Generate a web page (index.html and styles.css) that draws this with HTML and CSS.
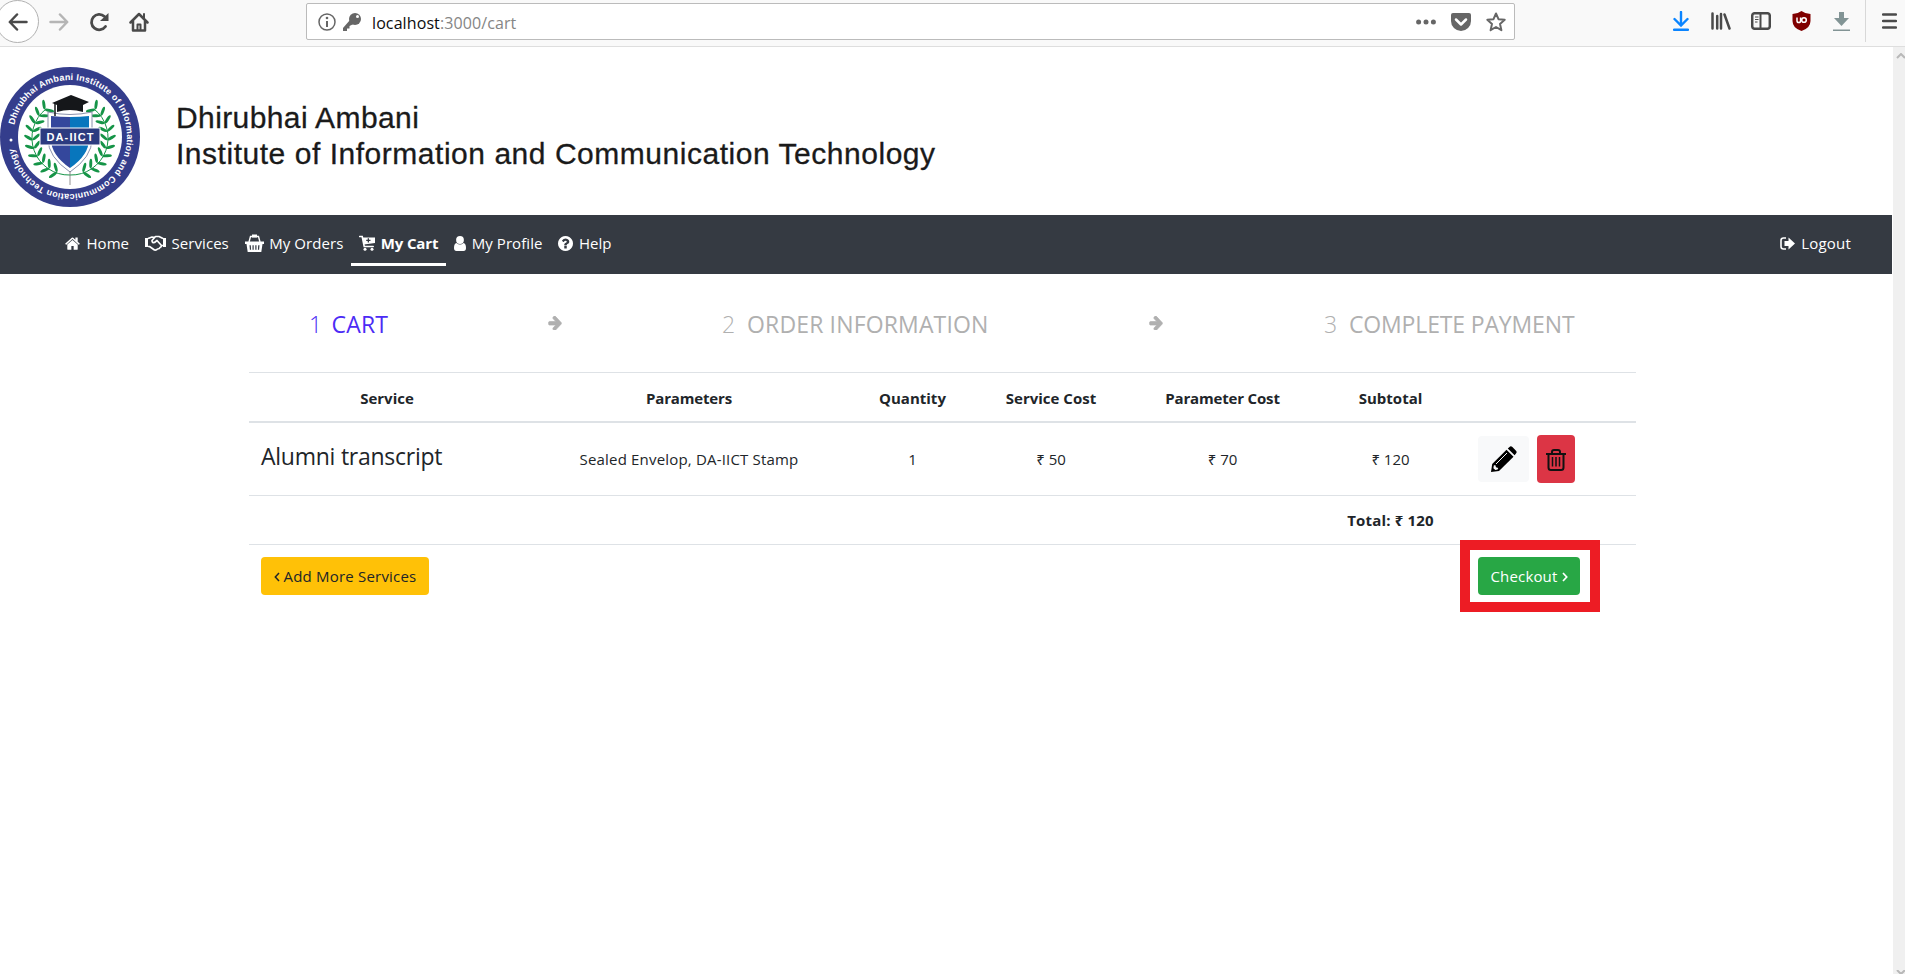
FILE: index.html
```html
<!DOCTYPE html>
<html lang="en">
<head>
<meta charset="utf-8">
<title>My Cart</title>
<link rel="stylesheet" href="styles.css">
</head>
<body>
<header class="browser">
  <div class="browser-nav">
    <span class="back"><svg width="20" height="18" viewBox="0 0 20 18"><path d="M18.500 9H2.500M9 1.500L1.800 9 9 16.500" class="ln dark w25"/></svg></span>
    <svg class="fwd" width="20" height="18" viewBox="0 0 20 18"><path d="M1.500 9h16M11 1.500L18.200 9 11 16.500" class="ln pale w25"/></svg>
    <svg class="reload" width="20" height="20" viewBox="0 0 20 20"><path d="M16.500 14.500A7.700 7.700 0 1 1 15.500 4.500" class="ln dark w3"/><path d="M19.500 1v8H11z" fill="#4a4a4a"/></svg>
    <svg class="home" width="20" height="20" viewBox="0 0 20 20"><path d="M1.500 10.500L10 2l8.500 8.500M4 9v9.500h12V9" class="ln dark w25"/><path d="M15 2v5M8.500 18v-5.500h3V18" class="ln dark w2"/></svg>
  </div>
  <div class="urlbar">
    <svg width="18" height="18" viewBox="0 0 18 18"><circle cx="9" cy="9" r="8" class="ln grey w15"/><path d="M9 8v6" stroke="#666" stroke-width="2"/><circle cx="9" cy="5" r="1.300" fill="#666"/></svg>
    <svg class="key" width="18" height="18" viewBox="0 0 18 18"><circle cx="12" cy="6" r="6" fill="#666"/><circle cx="14.500" cy="3.500" r="1.500" fill="#fff"/><path d="M7 7L0 15v3h4v-2.500h2.500V13l4-2z" fill="#666"/></svg>
    <span class="url"><b>localhost</b>:3000/cart</span>
    <span class="page-actions">
      <svg width="20" height="6" viewBox="0 0 20 6"><circle cx="2.600" cy="3" r="2.500" fill="#666"/><circle cx="10" cy="3" r="2.500" fill="#666"/><circle cx="17.400" cy="3" r="2.500" fill="#666"/></svg>
      <svg width="20" height="18" viewBox="0 0 20 18"><path d="M2 0h16a2 2 0 0 1 2 2v6a10 10 0 0 1-20 0V2a2 2 0 0 1 2-2z" fill="#666"/><path d="M5 6.500l5 5 5-5" fill="none" stroke="#fff" stroke-width="2.500" stroke-linecap="round" stroke-linejoin="round"/></svg>
      <svg width="20" height="20" viewBox="0 0 20 20"><path d="M10 1.500l2.500 5.700 6.200.6-4.700 4.100 1.400 6.300L10 15l-5.400 3.200L6 11.900 1.300 7.800l6.200-.6z" class="ln grey w2"/></svg>
    </span>
  </div>
  <div class="browser-tools">
    <span><svg width="16" height="20" viewBox="0 0 16 20"><path d="M8 1v13M1.500 8L8 14.500 14.500 8M1 18.800h14" fill="none" stroke="#0a84ff" stroke-width="2.400" stroke-linecap="round"/></svg></span>
    <span><svg width="20" height="18" viewBox="0 0 20 18"><path d="M1.500 1.500v15M6.200 4v12.500M10 2v14.500M13.500 2.500l5 14" class="ln dark w25"/></svg></span>
    <span><svg width="20" height="18" viewBox="0 0 20 18"><rect x="1.200" y="1.200" width="17.600" height="15.600" rx="2.500" class="ln dark w25"/><path d="M9.500 1v16" stroke="#4a4a4a" stroke-width="2"/><path d="M4 5h3.500M4 7.500h3.500M4 10h2.500" stroke="#4a4a4a" stroke-width="1.200"/></svg></span>
    <span><svg width="19" height="20" viewBox="0 0 19 20"><path d="M9.500 0q4 3 9 3v7q0 7-9 10Q.5 17 .5 10V3q5 0 9-3z" fill="#800000"/><path d="M5 6.500v3.200a1.800 1.800 0 0 0 3.600 0V6.500" fill="none" stroke="#fff" stroke-width="1.500"/><circle cx="12" cy="9" r="2.300" fill="none" stroke="#fff" stroke-width="1.600"/></svg></span>
    <span><svg width="17" height="19" viewBox="0 0 17 19"><path d="M6 0h5v6h5l-7.500 8L1 6h5zM0 17.500h17V19H0z" fill="#829495"/></svg></span>
    <span class="menu"><svg width="15" height="16" viewBox="0 0 15 16"><path d="M1 1.500h13M1 8h13M1 14.500h13" class="ln dark w25"/></svg></span>
  </div>
</header>
<div class="viewport">
<main class="page">
  <div class="brand">
    <svg class="seal" width="142" height="142" viewBox="-71 -71 142 142">
      <defs><path id="ring" d="M-57 0A57 57 0 0 1 57 0A57 57 0 0 1-57 0"/>
      <g id="leaf" fill="#159447"><ellipse cx="-4" cy="-3" rx="4.800" ry="1.500" transform="rotate(35 -4 -3)"/><ellipse cx="4" cy="-3" rx="4.800" ry="1.500" transform="rotate(-35 4 -3)"/></g>
      <g id="branch"><path d="M0 38A37 37 0 0 1-24-28" fill="none" stroke="#159447" stroke-width="1"/>
      <use href="#leaf" transform="rotate(200) translate(0 -37.500) rotate(90)"/><use href="#leaf" transform="rotate(213) translate(0 -37.500) rotate(90)"/><use href="#leaf" transform="rotate(226) translate(0 -37.500) rotate(90)"/><use href="#leaf" transform="rotate(239) translate(0 -37.500) rotate(90)"/><use href="#leaf" transform="rotate(252) translate(0 -37.500) rotate(90)"/><use href="#leaf" transform="rotate(265) translate(0 -37.500) rotate(90)"/><use href="#leaf" transform="rotate(278) translate(0 -37.500) rotate(90)"/><use href="#leaf" transform="rotate(291) translate(0 -37.500) rotate(90)"/><use href="#leaf" transform="rotate(304) translate(0 -37.500) rotate(90)"/><use href="#leaf" transform="rotate(317) translate(0 -37.500) rotate(90)"/></g></defs>
      <circle r="70" fill="#343d8c"/><circle r="52" fill="#fff"/>
      <text class="ring-text"><textPath href="#ring" startOffset="12" textLength="334">Dhirubhai Ambani Institute of Information and Communication Technology</textPath></text>
      <circle cx="-59" cy="3" r="1.500" fill="#fff"/>
      <use href="#branch"/><use href="#branch" transform="scale(-1 1)"/>
      <path d="M-22-25q22 5 44 0v27q0 18-22 33-22-15-22-33z" fill="#fff" stroke="#8a91ac"/>
      <path d="M0-20q-10 0-19-1V2Q-19 18 0 31z" fill="#34479c"/><path d="M0-20q10 0 19-1V2Q19 18 0 31z" fill="#0876bd"/>
      <path d="M0 34v14" stroke="#777" stroke-width=".8"/>
      <rect x="-30" y="-9" width="60" height="17" fill="#2c3b80" stroke="#fff"/>
      <text class="seal-name" x="0" y="3.500" text-anchor="middle" textLength="47">DA-IICT</text>
      <path d="M-18-34L1-42l18 7-6 3v7q-13-4-26 0v-7z" fill="#15171a"/><path d="M-15-34v13" stroke="#15171a" stroke-width="1.500"/>
    </svg>
    <h1 class="brand-name"><span class="brand-short">Dhirubhai Ambani</span><br>Institute of Information and Communication Technology</h1>
  </div>

  <nav class="nav">
    <a class="nav-link home-link"><svg width="15" height="16" viewBox="0 0 1664 1664" preserveAspectRatio="none"><path d="M1408 992v480q0 26-19 45t-45 19h-384v-384h-256v384h-384q-26 0-45-19t-19-45v-480l576-477 575 474q1 2 1 6zm223-69l-62 74q-8 9-21 11h-3q-13 0-21-7l-692-577-692 577q-12 8-24 7-13-2-21-11l-62-74q-8-10-7-23.500t11-21.500l719-599q32-26 76-26t76 26l244 204v-195q0-14 9-23t23-9h192q14 0 23 9t9 23v408l219 182q10 8 11 21.500t-7 23.500z"/></svg><span>Home</span></a>
    <a class="nav-link"><svg width="21" height="16" viewBox="0 0 21 16"><path d="M0 3h3v9H0zM18 3h3v9h-3z"/><path d="M3 3.500l4-1.500 3 .5M3 11.500h1.500l5 3.500q2 .3 3-1 2 0 2.500-1.500 1.500-.5 1.500-2H18M18 3.500L14 1.500h-3.500L7 5.500q0 2.500 2.500 2L12 5.500l4.500 5" fill="none" stroke="currentColor" stroke-width="1.700" stroke-linejoin="round"/></svg><span>Services</span></a>
    <a class="nav-link"><svg width="19" height="18" viewBox="0 0 19 18"><path d="M4 8L5.500 2.500h8L15 8" fill="none" stroke="currentColor" stroke-width="1.400"/><path d="M7 .5h5v3H7zM0 7.500h19v2.500H0z"/><path fill-rule="evenodd" d="M1.500 10h16l-1.200 8H2.700zM4.500 11.300l.4 4.500h1.200l-.3-4.500zM7.500 11.300v4.500h1.200v-4.500zM10.300 11.300v4.500h1.200v-4.500zM13.200 11.300l-.3 4.500h1.200l.4-4.500z"/></svg><span>My Orders</span></a>
    <a class="nav-link active"><svg width="16" height="16" viewBox="0 0 16 16"><path d="M.7 1.500h2.500l2 10h9" fill="none" stroke="currentColor" stroke-width="1.600" stroke-linecap="round"/><path fill-rule="evenodd" d="M3.500 2.500H16v5.500L5 9.500zM8.700 3.300v1.500H7.200V6h1.500v1.500H10V6h1.500V4.800H10V3.300z"/><circle cx="6" cy="14.300" r="1.500"/><circle cx="13" cy="14.300" r="1.500"/></svg><span>My Cart</span></a>
    <a class="nav-link"><svg width="12" height="15" viewBox="0 0 12 15"><circle cx="6" cy="4" r="3.900"/><path d="M2.500 7q3.500 3 7 0Q12 7.500 12 12q0 3-2.500 3h-7Q0 15 0 12q0-4.500 2.500-5z"/></svg><span>My Profile</span></a>
    <a class="nav-link"><svg width="15" height="15" viewBox="0 128 1536 1536"><path d="M896 1376v-192q0-14-9-23t-23-9h-192q-14 0-23 9t-9 23v192q0 14 9 23t23 9h192q14 0 23-9t9-23zm256-672q0-88-55.500-163t-138.500-116-170-41q-243 0-371 213-15 24 8 42l132 100q7 6 19 6 16 0 25-12 53-68 86-92 34-24 86-24 48 0 85.500 26t37.500 59q0 38-20 61t-68 45q-63 28-115.500 86.500t-52.500 125.500v36q0 14 9 23t23 9h192q14 0 23-9t9-23q0-19 21.500-49.500t54.500-49.500q32-18 49-28.500t46-35 44.500-48 28-60.500 12.500-81zm384 192q0 209-103 385.500t-279.500 279.500-385.500 103-385.500-103-279.500-279.500-103-385.500 103-385.500 279.500-279.500 385.500-103 385.500 103 279.500 279.500 103 385.500z"/></svg><span>Help</span></a>
    <a class="nav-link logout"><svg width="15" height="13" viewBox="0 0 15 13"><path d="M6 1H3.500Q1 1 1 3.500v6Q1 12 3.500 12H6" fill="none" stroke="currentColor" stroke-width="1.600"/><path d="M4.500 4h4V.5l6.500 6-6.500 6V9h-4z"/></svg><span>Logout</span></a>
  </nav>

  <section class="cart">
    <div class="steps">
      <div class="step current"><i>1</i>CART</div>
      <svg width="14" height="14" viewBox="0 180 1600 1500" preserveAspectRatio="none"><path stroke="currentColor" stroke-width="70" d="M1536 960q0 54-37 91l-651 651q-39 37-91 37-51 0-90-37l-75-75q-38-38-38-91t38-91l293-293H181q-52 0-84.500-37.500T64 1024V896q0-53 32.500-90.500T181 768h704L592 474q-38-36-38-90t38-90l75-75q38-38 90-38 53 0 91 38l651 651q37 35 37 90z"/></svg>
      <div class="step"><i>2</i><span class="s2">ORDER INFORMATION</span></div>
      <svg width="14" height="14" viewBox="0 180 1600 1500" preserveAspectRatio="none"><path stroke="currentColor" stroke-width="70" d="M1536 960q0 54-37 91l-651 651q-39 37-91 37-51 0-90-37l-75-75q-38-38-38-91t38-91l293-293H181q-52 0-84.500-37.500T64 1024V896q0-53 32.500-90.500T181 768h704L592 474q-38-36-38-90t38-90l75-75q38-38 90-38 53 0 91 38l651 651q37 35 37 90z"/></svg>
      <div class="step"><i>3</i><span class="s3">COMPLETE PAYMENT</span></div>
    </div>
    <div class="row head">
      <span>Service</span><span class="tight">Parameters</span><span>Quantity</span><span>Service Cost</span><span class="tight">Parameter Cost</span><span>Subtotal</span><span></span>
    </div>
    <div class="row item">
      <span class="name">Alumni transcript</span><span class="params">Sealed Envelop, DA-IICT Stamp</span><span>1</span><span>₹ 50</span><span>₹ 70</span><span>₹ 120</span>
      <div class="actions">
        <button class="edit"><svg width="27" height="27" viewBox="0 0 27 27"><path d="M1 26l1.200-8L16.500 3.700l7 7L9 25z"/><path d="M17.800 2.400L19.500.9q1.400-1.200 2.900.2L26 4.700q1.300 1.400 0 2.800l-1.400 1.800z"/><path d="M6 18L17 7" stroke="#f8f9fa" fill="none"/><path d="M3.800 19.500l1.500-.5.700 2.200 2.200.8-.6 1.600-2.200.5-2-1.800z" fill="#f8f9fa"/></svg></button>
        <button class="delete"><svg width="20" height="22" viewBox="0 0 20 22"><path d="M0 5h20M6 4.500V3q0-2 2-2h4q2 0 2 2v1.500M2.500 5v13.500q0 2.500 2.500 2.500h10q2.500 0 2.500-2.500V5" fill="none" stroke="#111" stroke-width="2"/><path d="M6.500 8v9.500M10 8v9.500M13.500 8v9.500" stroke="#111" stroke-width="1.500"/></svg></button>
      </div>
    </div>
    <div class="row total"><b>Total: ₹ 120</b></div>
    <div class="footer">
      <button class="btn add"><svg width="6" height="10" viewBox="0 0 6 10"><path d="M5 1L1.300 5 5 9" fill="none" stroke="currentColor" stroke-width="1.500"/></svg><span>Add More Services</span></button>
      <button class="btn checkout"><span>Checkout</span><svg width="6" height="10" viewBox="0 0 6 10"><path d="M1 1l3.700 4L1 9" fill="none" stroke="currentColor" stroke-width="1.700"/></svg></button>
    </div>
  </section>
</main>
<div class="scrollbar"><svg width="9" height="6" viewBox="0 0 9 6"><path d="M1 5l4-4 4 4" fill="none" stroke="#b8b8b8" stroke-width="2"/></svg><svg width="9" height="4" viewBox="0 0 9 4"><path d="M1 0l4 4 4-4" fill="none" stroke="#b8b8b8" stroke-width="2"/></svg></div>
</div>
</body>
</html>
```

FILE: styles.css
```css
*, *::after { box-sizing: border-box; }
body {
  margin: 0;
  height: 974px;
  display: flex;
  flex-direction: column;
  overflow: hidden;
  background: #fff;
  color: #212529;
  font: 15px/24px "Open Sans", "Noto Sans", sans-serif;
}
svg { display: block; flex: none; fill: currentColor; }
button { border: 0; padding: 0; font: inherit; color: inherit; }
.ln { fill: none; stroke-linecap: round; stroke-linejoin: round; }
.dark { stroke: #4a4a4a; }
.pale { stroke: #b5b5b5; }
.grey { stroke: #666; }
.w3 { stroke-width: 2.8; }
.w25 { stroke-width: 2.5; }
.w2 { stroke-width: 2; }
.w15 { stroke-width: 1.5; }

/* browser toolbar */
.browser {
  display: flex;
  align-items: flex-start;
  height: 47px;
  flex: none;
  background: #f9f9f9;
  border-bottom: 1px solid #dedede;
}
.browser > * { flex: none; }
.browser-nav { display: flex; align-items: center; width: 306px; height: 43px; }
.back {
  display: flex;
  align-items: center;
  justify-content: center;
  width: 43px;
  height: 43px;
  margin-left: -4px;
  border: 1px solid #b1b1b1;
  border-radius: 50%;
  background: #fff;
}
.fwd { margin-left: 10px; }
.reload, .home { margin-left: 20px; }
.urlbar {
  display: flex;
  align-items: center;
  width: 1209px;
  height: 37px;
  margin-top: 3px;
  padding: 0 8px 0 11px;
  background: #fff;
  border: 1px solid #bbb;
  border-radius: 2px;
}
.key { margin-left: 7px; }
.url { margin: 2px 0 0 11px; font-size: 16px; letter-spacing: .1px; color: #858585; }
.url b { font-weight: 400; color: #0c0c0d; }
.page-actions { display: flex; align-items: center; gap: 15px; margin-left: auto; }
.browser-tools { display: flex; align-items: center; height: 42px; margin-left: 146px; }
.browser-tools span { display: flex; align-items: center; justify-content: center; flex: none; width: 40px; height: 42px; }
.browser-tools .menu { margin-left: 4px; border-left: 1px solid #d8d8d8; width: 48px; }

/* page */
.viewport { display: flex; flex: 1; }
.page { width: 1892px; }
.scrollbar {
  display: flex;
  flex-direction: column;
  align-items: flex-end;
  justify-content: space-between;
  width: 12px;
  margin-left: 1px;
  padding: 6px 0 0;
  background: #f0f0f0;
}
.brand { display: flex; height: 168px; padding-top: 18px; }
.seal { margin: .5px 1px 0 -1px; }
.brand-name {
  margin: 35px 0 0 34px;
  font: 400 30px/35.5px "Liberation Sans", Arial, sans-serif;
  letter-spacing: .53px;
  color: #1a1a1a;
  -webkit-text-stroke: .3px #1a1a1a;
}
.brand-short { letter-spacing: .4px; }
.ring-text { font: bold 9px "Liberation Sans", Arial, sans-serif; fill: #fff; }
.seal-name { font: bold 11px "Liberation Sans", Arial, sans-serif; fill: #fff; }

.nav { display: flex; height: 59px; padding: 8px 33px 8px 57px; background: #353a42; color: #fff; }
.nav-link {
  display: flex;
  align-items: center;
  gap: 5.5px;
  height: 43px;
  padding: 8px;
  border-bottom: 3px solid transparent;
  letter-spacing: .05px;
}
.home-link { gap: 6.5px; }
.active { font-weight: 700; letter-spacing: -.15px; border-color: #fff; }
.logout { margin-left: auto; gap: 6px; letter-spacing: .2px; }

.cart { width: 1387px; margin-left: 249px; }
.steps {
  display: grid;
  grid-template-columns: 241px 174.5px 427px 175px auto;
  align-items: center;
  height: 98px;
  padding-left: 57.5px;
  color: #b0b0b0;
  font-size: 23px;
  line-height: 36px;
}
.step { margin-top: 2px; }
.step i { display: inline-block; width: 25px; font-style: normal; font-weight: 300; }
.current { color: #4c2bf5; letter-spacing: .2px; }
.current i { padding-left: 2.5px; }
.s2 { letter-spacing: .15px; }
.s3 { letter-spacing: -.15px; }

.row {
  display: grid;
  grid-template-columns: 276px 328px 119px 158px 185px 151px 170px;
  align-items: center;
  text-align: center;
  border-top: 1px solid #dee2e6;
}
.head { height: 51px; padding-top: 2px; border-bottom: 2px solid #dee2e6; font-weight: 700; }
.head .tight { letter-spacing: -.17px; }
.item { height: 72px; border-top: 0; }
.name { padding-left: 12px; text-align: left; font-size: 23px; letter-spacing: -.25px; margin-top: -6px; }
.params { letter-spacing: .18px; }
.actions { display: flex; align-items: center; gap: 8px; padding-left: 12px; }
.edit, .delete { display: flex; align-items: center; justify-content: center; border-radius: 4px; }
.edit { width: 51px; height: 46px; background: #f8f9fa; color: #000; }
.delete { width: 38px; height: 48px; padding-top: 2px; background: #dc3545; }
.total { height: 49px; }
.total b { grid-column: 6; letter-spacing: .17px; }

.footer { display: flex; justify-content: space-between; padding: 12px 56px 12px 12px; border-top: 1px solid #dee2e6; }
.btn { display: flex; align-items: center; justify-content: center; height: 38px; border-radius: 4px; }
.btn svg { margin-top: 1px; }
.add { width: 168px; gap: 4px; background: #ffc107; letter-spacing: .2px; }
.checkout { position: relative; width: 102px; gap: 4px; background: #28a745; color: #fff; letter-spacing: .16px; }
.checkout::after {
  content: "";
  position: absolute;
  top: -17px;
  left: -18px;
  width: 140px;
  height: 72px;
  border: 10px solid #ed1c24;
}
```
